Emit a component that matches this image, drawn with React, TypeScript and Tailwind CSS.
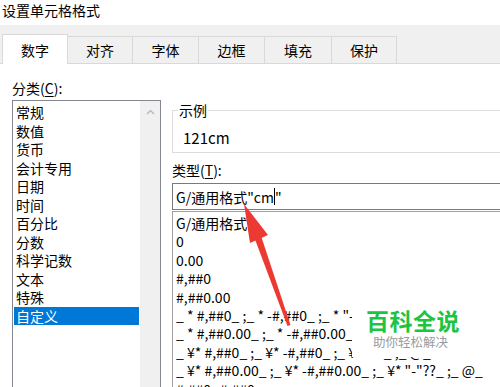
const tabs = ["数字", "对齐", "字体", "边框", "填充", "保护"];
const tabWidths = ["w-[66px]", "w-[65px]", "w-[66px]", "w-[66px]", "w-[67px]", "w-[65px]"];

const categories = [
  "常规",
  "数值",
  "货币",
  "会计专用",
  "日期",
  "时间",
  "百分比",
  "分数",
  "科学记数",
  "文本",
  "特殊",
  "自定义",
];

const formats = [
  "G/通用格式",
  "0",
  "0.00",
  "#,##0",
  "#,##0.00",
  '_ * #,##0_ ;_ * -#,##0_ ;_ * "-"_ ;_ @_ ',
  '_ * #,##0.00_ ;_ * -#,##0.00_ ;_ * "-"??_ ;_ @_ ',
  '_ ¥* #,##0_ ;_ ¥* -#,##0_ ;_ ¥* "-"_ ;_ @_ ',
  '_ ¥* #,##0.00_ ;_ ¥* -#,##0.00_ ;_ ¥* "-"??_ ;_ @_ ',
  "#,##0;-#,##0",
];

export default function App() {
  return (
    <div className="relative w-[500px] h-[387px] overflow-hidden bg-white text-black text-[14px] font-['Noto_Sans_CJK_SC','Microsoft_YaHei',sans-serif]">
      {/* title */}
      <div className="h-[25px] pl-[2px] leading-[20px]">设置单元格格式</div>

      {/* tabs */}
      <div className="h-[39px] bg-[#f0f0f0] border-b border-[#d9d9d9] flex items-end pl-[2px]">
        {tabs.map((t, i) =>
          i === 0 ? (
            <div
              key={t}
              className={`${tabWidths[i]} h-[30px] -mb-px bg-white border border-b-0 border-[#d9d9d9] flex items-center justify-center leading-[20px]`}
            >
              {t}
            </div>
          ) : (
            <div
              key={t}
              className={`${tabWidths[i]} h-[27px] border-t border-r border-[#d9d9d9] flex items-center justify-center leading-[20px]`}
            >
              {t}
            </div>
          )
        )}
      </div>

      <div className="flex">
        {/* category column */}
        <div className="pl-[12px] w-[161px] shrink-0">
          <div className="mt-[14px] leading-[20px]">
            分类(<span className="underline underline-offset-2">C</span>):
          </div>
          <div className="mt-[2px] h-[300px] border border-[#828790] flex">
            <div className="flex-1 pt-[2px] px-px">
              {categories.map((c) => (
                <div
                  key={c}
                  className={`h-[18.5px] leading-[18.5px] pl-[2px] ${
                    c === "自定义" ? "bg-[#0078d7] text-white" : ""
                  }`}
                >
                  {c}
                </div>
              ))}
            </div>
            <div className="w-[20px] bg-[#f0f0f0] flex justify-center pt-[8px]">
              <svg width="9" height="6" viewBox="0 0 9 6">
                <polyline points="1,5 4.5,1.5 8,5" fill="none" stroke="#b4b4b4" strokeWidth="1.2" />
              </svg>
            </div>
          </div>
        </div>

        {/* right column */}
        <div className="ml-[11px] w-[340px] shrink-0">
          <fieldset className="mt-[36px] border border-[#dcdcdc] pb-[4px]">
            <legend className="ml-[5px] px-px leading-[20px]">示例</legend>
            <div className="mt-[8px] pl-[10px] text-[15px] leading-[20px]">121cm</div>
          </fieldset>
          <div className="mt-[7px] leading-[20px]">
            类型(<span className="underline underline-offset-2">T</span>):
          </div>
          <div className="mt-[3px] h-[27px] border border-[#7a7a7a] pl-[3px] flex items-center leading-[20px] whitespace-nowrap">
            G/通用格式"cm
            <span className="inline-block w-px h-[17px] bg-black" />"
          </div>
          <div className="mt-px h-[200px] border border-[#a0a0a0] pt-[2px] pl-[3px]">
            {formats.map((f) => (
              <div key={f} className="h-[18.4px] leading-[18.4px] whitespace-pre">
                {f}
              </div>
            ))}
          </div>
        </div>
      </div>

      {/* watermark */}
      <div className="absolute left-[352px] top-[306px] w-[148px] h-[51px] bg-white flex flex-col items-start pl-[14px]">
        <div className="text-[23px] leading-[28px] font-bold text-[#1dc43f] tracking-[0.5px]">百科全说</div>
        <div className="ml-[7px] text-[12.5px] leading-[16px] text-[#9a9a9a]">助你轻松解决</div>
      </div>

      {/* red arrow */}
      <svg className="absolute left-0 top-0 pointer-events-none" width="500" height="387">
        <polygon points="244,204 268,235 250,243" fill="#ec3a33" />
        <polygon points="260.4,234 254,236.7 287.5,326 290.5,325" fill="#ec3a33" />
      </svg>
    </div>
  );
}
